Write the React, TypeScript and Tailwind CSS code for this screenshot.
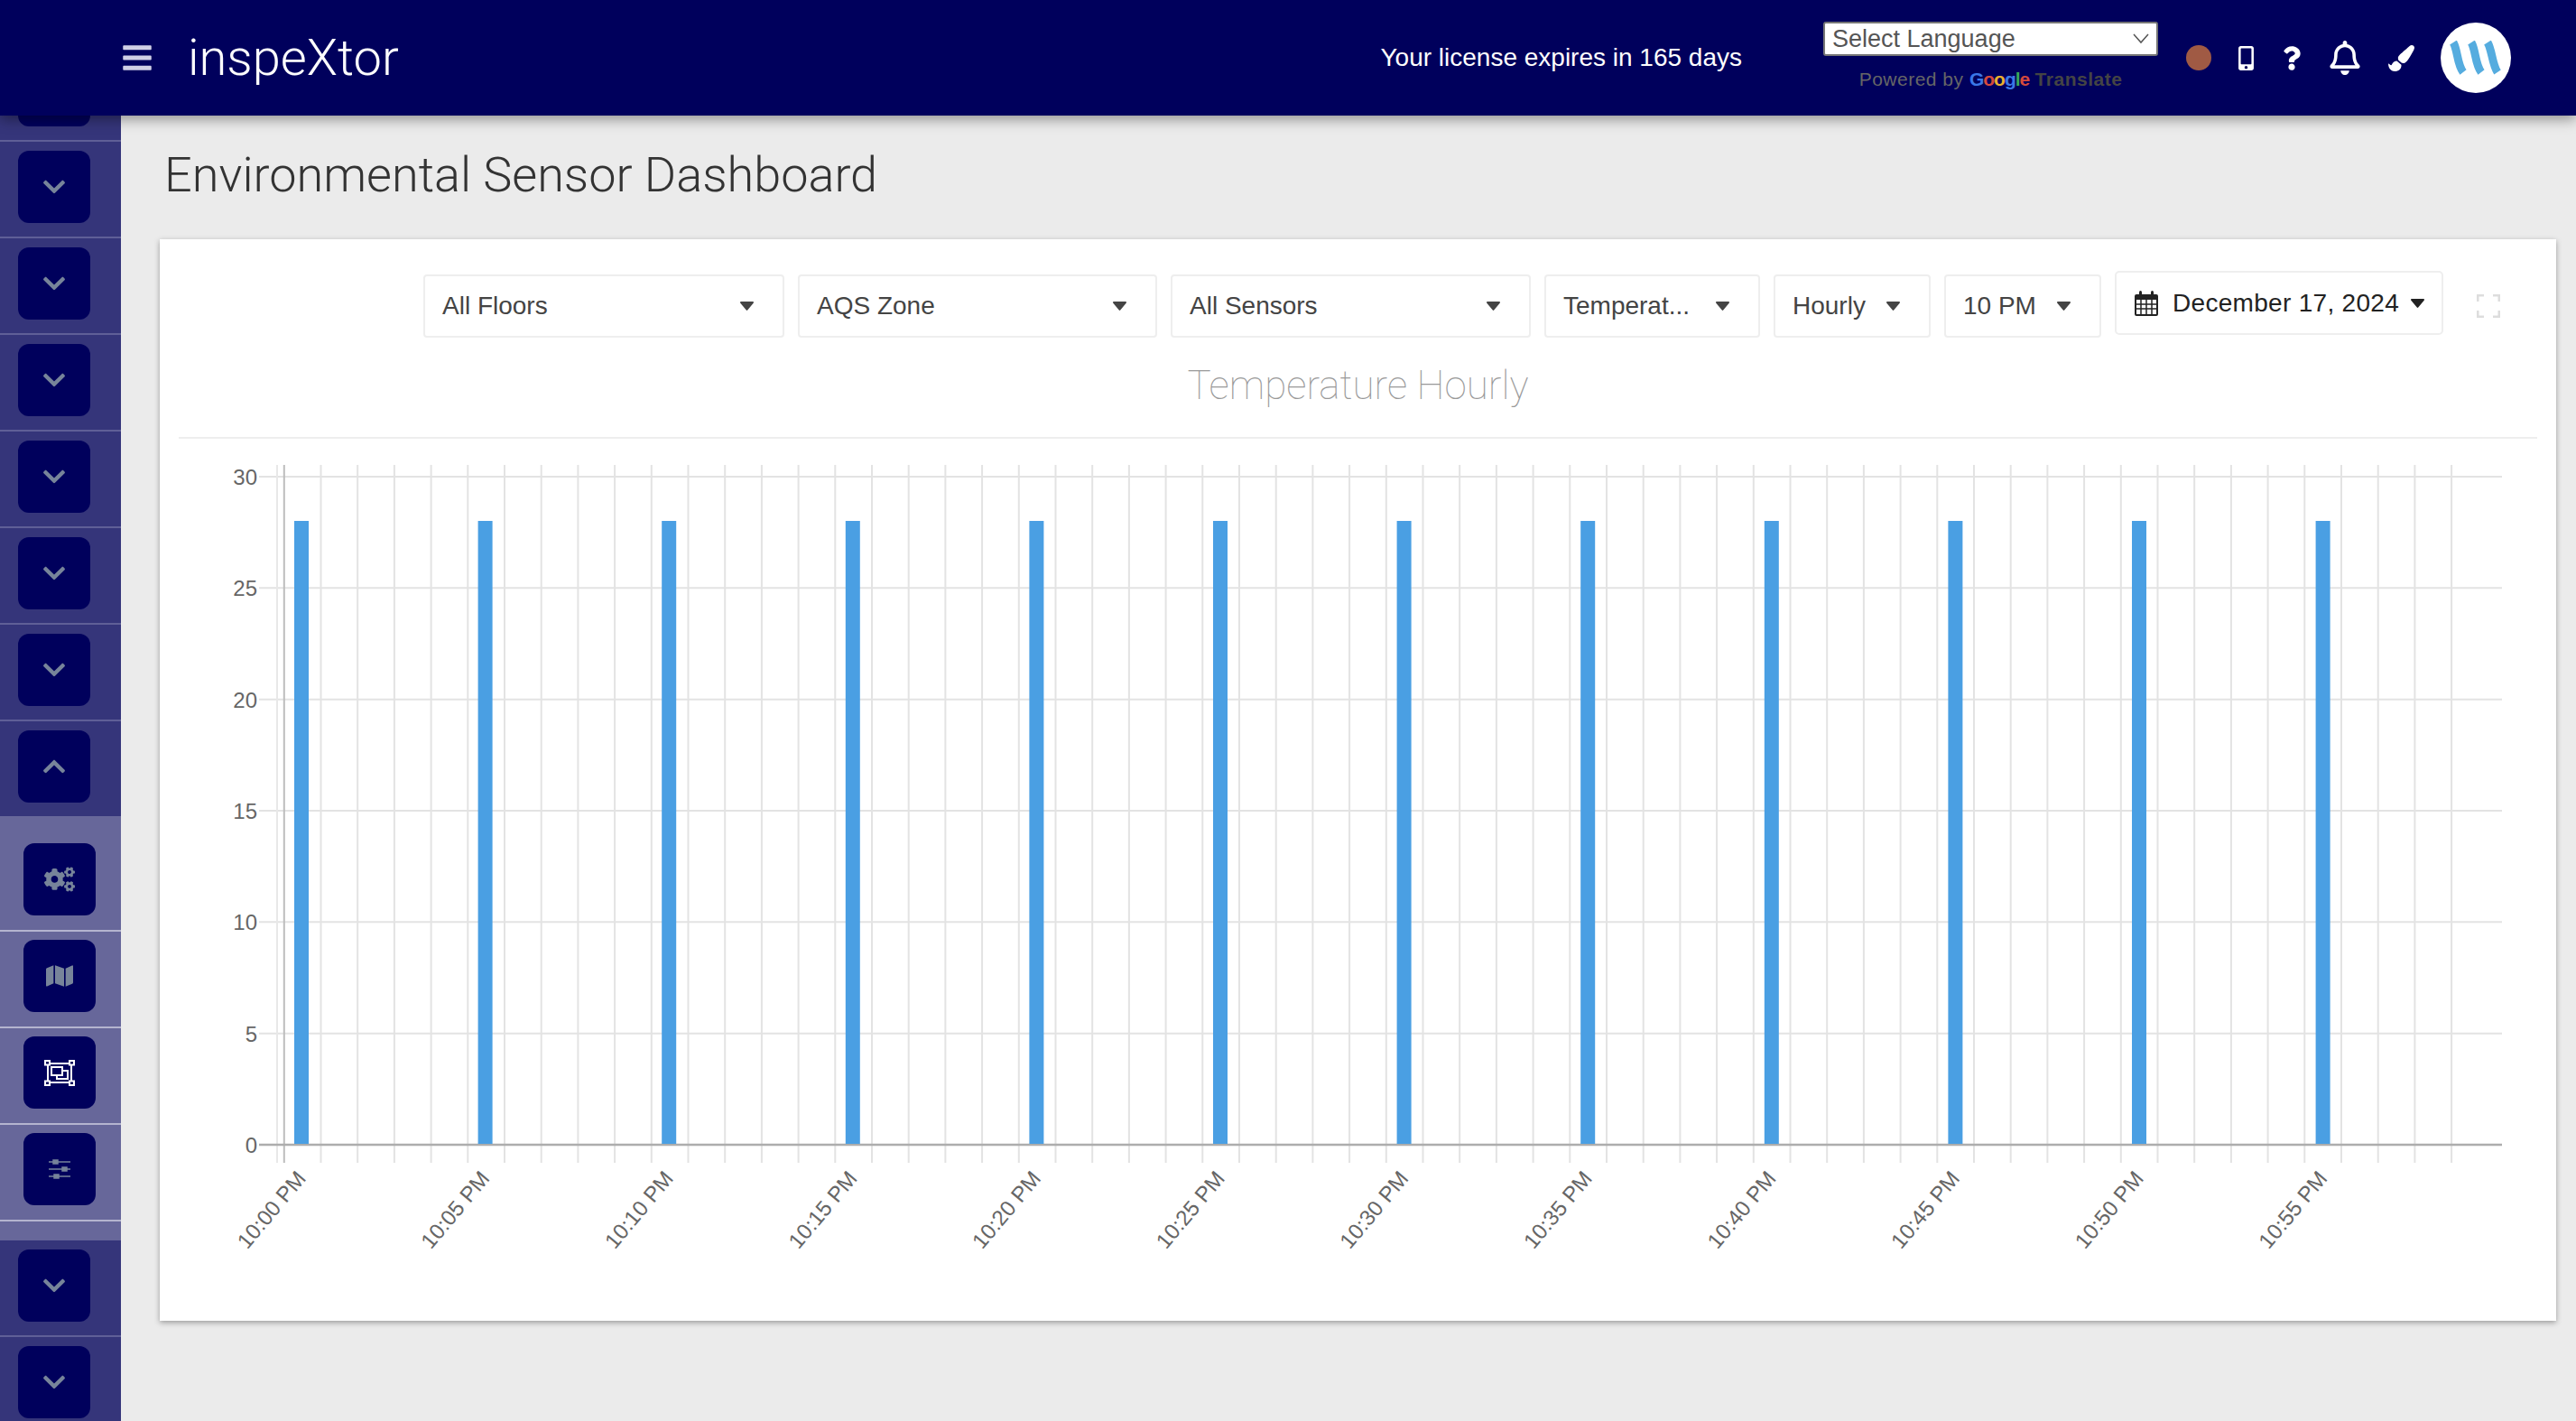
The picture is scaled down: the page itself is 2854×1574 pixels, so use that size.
import { FaBars, FaChevronDown, FaChevronUp, FaCogs, FaMap, FaMobileAlt, FaQuestion, FaRegBell, FaPaintBrush } from 'react-icons/fa'

const sans = 'font-["Liberation_Sans",Arial,sans-serif]'
const light = 'font-["Roboto",sans-serif]'

const hours = ['10:00 PM', '10:05 PM', '10:10 PM', '10:15 PM', '10:20 PM', '10:25 PM', '10:30 PM', '10:35 PM', '10:40 PM', '10:45 PM', '10:50 PM', '10:55 PM']
const ticks = [30, 25, 20, 15, 10, 5, 0]

function Caret({ className = 'text-[#444]' }: { className?: string }) {
  return (
    <svg width="15" height="10" viewBox="0 0 15 10" className={className}>
      <path d="M1 0h13c1 0 1.300 1 .7 1.700L8.200 9.500c-.4.500-1 .500-1.400 0L.3 1.700C-.3 1 0 0 1 0z" fill="currentColor" />
    </svg>
  )
}

function Dropdown({ label, width }: { label: string; width: string }) {
  return (
    <div className={`${width} h-[70px] flex items-center justify-between pl-[19px] pr-[32px] bg-white border-2 border-[#eee] rounded-[4px] text-[28px] text-[#444]`}>
      <span>{label}</span>
      <Caret />
    </div>
  )
}

function NavChevron({ up = false }: { up?: boolean }) {
  return (
    <div className="border-b-2 border-[#5f5f97] h-[107px] pt-[10px] pl-[20px]">
      <div className="w-[80px] h-[80px] rounded-[12px] bg-[#00005c] flex items-center justify-center text-[#77849a]">
        {up ? <FaChevronUp size={28} /> : <FaChevronDown size={28} />}
      </div>
    </div>
  )
}

function ToolButton({ children, last = false }: { children: React.ReactNode; last?: boolean }) {
  return (
    <div className={`border-b-2 border-[#b4b4cf] pl-[26px] pb-[16px] ${last ? '' : ''}`}>
      <div className="w-[80px] h-[80px] rounded-[12px] bg-[#00005c] flex items-center justify-center text-[#77849a]">
        {children}
      </div>
    </div>
  )
}

function Sidebar() {
  return (
    <aside className="w-[134px] shrink-0 bg-[#35357a] overflow-hidden">
      <div className="border-b-2 border-[#5f5f97] h-[29px] pl-[20px]">
        <div className="w-[80px] h-[12px] rounded-b-[12px] bg-[#00005c]" />
      </div>
      {[0, 1, 2, 3, 4, 5].map((i) => (
        <NavChevron key={i} />
      ))}
      <div className="h-[105px] pt-[10px] pl-[20px]">
        <div className="w-[80px] h-[80px] rounded-[12px] bg-[#00005c] flex items-center justify-center text-[#77849a]">
          <FaChevronUp size={28} />
        </div>
      </div>
      <div className="bg-[#67679a] pt-[30px] pb-[21px] flex flex-col gap-[9px]">
        <ToolButton>
          <FaCogs size={34} />
        </ToolButton>
        <ToolButton>
          <FaMap size={30} />
        </ToolButton>
        <ToolButton>
          <svg width="34" height="29" viewBox="0 0 34 29" fill="none" stroke="white" strokeWidth="2">
            <path d="M5 4h24M5 25h24M4 5v19M30 5v19" />
            <rect x="1" y="1" width="5" height="4.500" />
            <rect x="28" y="1" width="5" height="4.500" />
            <rect x="1" y="23.500" width="5" height="4.500" />
            <rect x="28" y="23.500" width="5" height="4.500" />
            <rect x="8" y="8" width="12" height="9" />
            <path d="M20 12h6v9H14v-4" />
          </svg>
        </ToolButton>
        <ToolButton>
          <svg width="26" height="22" viewBox="0 0 26 22" fill="none" stroke="currentColor" strokeWidth="1.500">
            <path d="M1 3h24M1 11h24M1 19h24" />
            <rect x="6" y="1" width="5" height="4" fill="currentColor" />
            <rect x="16" y="9" width="5" height="4" fill="currentColor" />
            <rect x="7" y="17" width="5" height="4" fill="currentColor" />
          </svg>
        </ToolButton>
      </div>
      <div className="border-b-2 border-[#5f5f97] h-[107px] pt-[10px] pl-[20px]">
        <div className="w-[80px] h-[80px] rounded-[12px] bg-[#00005c] flex items-center justify-center text-[#77849a]">
          <FaChevronDown size={28} />
        </div>
      </div>
      <div className="pt-[10px] pl-[20px]">
        <div className="w-[80px] h-[80px] rounded-[12px] bg-[#00005c] flex items-center justify-center text-[#77849a]">
          <FaChevronDown size={28} />
        </div>
      </div>
    </aside>
  )
}

function Header() {
  return (
    <header className={`relative z-10 h-[128px] shrink-0 bg-[#00005c] shadow-[0_4px_14px_rgba(0,0,0,0.4)] flex items-center pl-[134px] pr-[72px] text-white ${sans}`}>
      <FaBars className="text-[#d0d0e6] w-[36px] h-[36px]" />
      <span className={`ml-[38px] text-[56px] leading-none font-light ${light}`}>inspeXtor</span>
      <span className="ml-auto text-[28px]">Your license expires in 165 days</span>
      <div className="ml-[90px] w-[371px] flex flex-col items-center self-start pt-[24px]">
        <div className="w-full h-[38px] bg-white border-2 border-[#767676] rounded-[3px] flex items-center justify-between pl-[8px] pr-[8px] text-[27px] text-[#555]">
          <span>Select Language</span>
          <svg width="18" height="12" viewBox="0 0 18 12" fill="none" stroke="#555" strokeWidth="1.500"><path d="M1 1l8 9 8-9" /></svg>
        </div>
        <div className="mt-[14px] text-[21px] leading-[24px] tracking-[0.5px] text-[#666] whitespace-nowrap">
          Powered by{' '}
          <span className="font-bold tracking-[-1px]">
            <span className="text-[#3b78e7]">G</span>
            <span className="text-[#d64a3c]">o</span>
            <span className="text-[#e8b12f]">o</span>
            <span className="text-[#3b78e7]">g</span>
            <span className="text-[#3aa757]">l</span>
            <span className="text-[#d64a3c]">e</span>
          </span>{' '}
          <span className="font-bold text-[#444]">Translate</span>
        </div>
      </div>
      <span className="ml-[31px] w-[28px] h-[28px] rounded-full bg-[#a05a44]" />
      <FaMobileAlt className="ml-[30px] w-[17px] h-[27px]" />
      <FaQuestion className="ml-[32px] w-[20px] h-[27px]" />
      <FaRegBell className="ml-[31px] w-[36px] h-[38px]" />
      <FaPaintBrush className="ml-[30px] w-[29px] h-[29px]" />
      <div className="ml-[29px] w-[78px] h-[78px] rounded-full bg-white flex items-center justify-center">
        <svg width="60" height="38" viewBox="0 0 60 38" fill="none" stroke="#55acdf" strokeWidth="9">
          <path d="M5 2c5 8 4 24 11 33" />
          <path d="M25 2c5 8 4 24 11 33" />
          <path d="M43 2c5 8 5 24 11 33" />
        </svg>
      </div>
    </header>
  )
}

function Chart() {
  const vlines = Array.from({ length: 60 }, (_, i) => 314.8 + i * 40.7)
  return (
    <svg viewBox="198 484 2613 920" className="block w-[2613px] h-[920px]">
      {/* grid */}
      {ticks.map((t, i) => {
        const y = 526 + i * 123.33
        return (
          <g key={t}>
            {t !== 0 && <line x1="287" x2="2772" y1={y} y2={y} stroke="#e3e3e3" strokeWidth="2" />}
            <text x="285" y={y + 9} textAnchor="end" fontSize="24" fill="#666" fontFamily="Liberation Sans">{t}</text>
          </g>
        )
      })}
      <line x1="307" x2="307" y1="513" y2="1286" stroke="#e8e8e8" strokeWidth="2" />
      {vlines.map((x, i) => (
        <line key={i} x1={x} x2={x} y1="513" y2="1286" stroke={i === 0 ? '#bdbdbd' : '#e3e3e3'} strokeWidth="2" />
      ))}
      <line x1="287" x2="2772" y1="1266" y2="1266" stroke="#adadad" strokeWidth="2.500" />
      {/* bars */}
      {hours.map((h, i) => {
        const x = 326 + i * 203.6
        return (
          <g key={h}>
            <rect x={x} y="575" width="16" height="690" fill="#4a9fe3" />
            <text
              x={x + 14}
              y="1304"
              textAnchor="end"
              fontSize="24"
              fill="#666"
              fontFamily="Liberation Sans"
              transform={`rotate(-50 ${x + 14} 1304)`}
            >
              {h}
            </text>
          </g>
        )
      })}
    </svg>
  )
}

export default function App() {
  return (
    <div className={`w-[2854px] h-[1574px] overflow-hidden flex flex-col bg-[#ebebeb] ${sans}`}>
      <Header />
      <div className="flex flex-1 min-h-0">
        <Sidebar />
        <main className="flex-1 min-w-0 pl-[43px] pr-[22px]">
          <h1 className={`pl-[5px] pt-[28px] h-[137px] text-[54px] leading-[76px] font-light text-[#333] ${light}`}>
            Environmental Sensor Dashboard
          </h1>
          <div className="h-[1198px] bg-white shadow-[0_2px_6px_rgba(0,0,0,0.35)] pl-[21px] pr-[21px]">
            <div className="pt-[35px] pl-[271px] flex items-start gap-[15px]">
              <div className="flex items-center gap-[15px] pt-[4px]">
                <Dropdown label="All Floors" width="w-[400px]" />
                <Dropdown label="AQS Zone" width="w-[398px]" />
                <Dropdown label="All Sensors" width="w-[399px]" />
                <Dropdown label="Temperat..." width="w-[239px]" />
                <Dropdown label="Hourly" width="w-[174px]" />
                <Dropdown label="10 PM" width="w-[174px]" />
              </div>
              <div className="w-[364px] h-[71px] flex items-center bg-white border-2 border-[#eee] rounded-[5px] pl-[20px] text-[28px] text-[#222]">
                <svg width="26" height="28" viewBox="0 0 26 28" className="shrink-0">
                  <path d="M2 4h22a2 2 0 0 1 2 2v20a2 2 0 0 1-2 2H2a2 2 0 0 1-2-2V6a2 2 0 0 1 2-2z" fill="#222" />
                  <path d="M2 10h22v16H2z" fill="white" />
                  <path d="M2 15h22M2 20h22M7 10v16M13 10v16M19 10v16" stroke="#222" strokeWidth="1.500" />
                  <rect x="5" y="0" width="3" height="7" rx="1.500" fill="#222" />
                  <rect x="18" y="0" width="3" height="7" rx="1.500" fill="#222" />
                </svg>
                <span className="ml-[16px] whitespace-nowrap tracking-[0.3px]">December 17, 2024</span>
                <Caret className="ml-[13px] text-[#222]" />
              </div>
              <svg width="26" height="26" viewBox="0 0 26 26" fill="none" stroke="#ddd" strokeWidth="3" className="ml-[22px] mt-[26px]">
                <path d="M1 8V1h7M18 1h7v7M25 18v7h-7M8 25H1v-7" />
              </svg>
            </div>
            <h2 className={`mt-[27px] text-center text-[44px] leading-[52px] font-thin text-[#999] ${light}`}>Temperature Hourly</h2>
            <div className="mt-[31px] border-t-2 border-[#eee]">
              <Chart />
            </div>
          </div>
        </main>
      </div>
    </div>
  )
}
